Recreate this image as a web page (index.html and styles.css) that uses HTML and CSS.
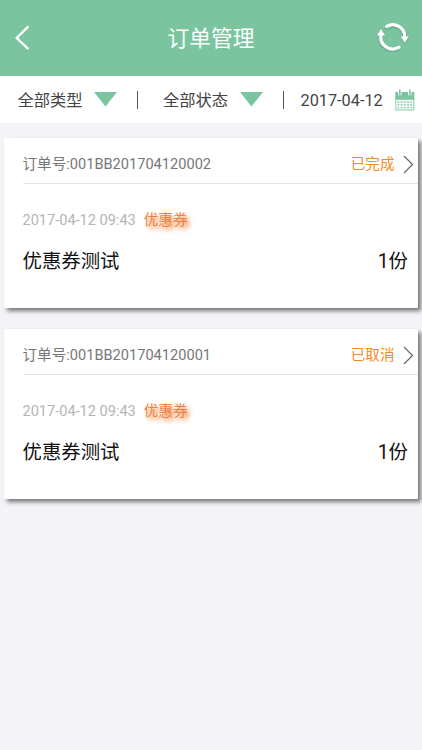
FILE: index.html
```html
<!DOCTYPE html>
<html lang="zh-CN">
<head>
<meta charset="utf-8">
<meta name="viewport" content="width=device-width, initial-scale=1">
<title>订单管理</title>
<link rel="stylesheet" href="styles.css">
</head>
<body>
<header class="topbar">
  <svg class="back" width="16" height="26" viewBox="0 0 16 26"><path d="M13.4 1.4 1.8 13l11.6 11.2" fill="none" stroke="#fff" stroke-width="2.4"/></svg>
  <h1 class="title">订单管理</h1>
  <svg class="refresh" width="34" height="32" viewBox="0 0 34 32">
    <g fill="none" stroke="#fff" stroke-width="3.2" stroke-linecap="round">
      <path d="M10.7 5.4A12 12 0 0 1 28.8 16"/>
      <path d="M23 26.2A12 12 0 0 1 5 14"/>
    </g>
    <path fill="#fff" d="M24.6 15.4h8.2l-4 6.4zM.9 14.6h8.2L5 8z"/>
  </svg>
</header>
<nav class="filters">
  <span class="type">全部类型</span>
  <svg class="arrow" width="23" height="15" viewBox="0 0 23 15"><path fill="#7ac5a0" d="M0 0h23L11.5 14.4z"/></svg>
  <i class="divider divider-type"></i>
  <span class="status">全部状态</span>
  <svg class="arrow" width="23" height="15" viewBox="0 0 23 15"><path fill="#7ac5a0" d="M0 0h23L11.5 14.4z"/></svg>
  <i class="divider divider-status"></i>
  <span class="date">2017-04-12</span>
  <svg class="calendar" width="20" height="22" viewBox="0 0 20 22">
    <path fill="#fff" stroke="#86cba9" d="M.8 9h18v12H.8z"/>
    <path fill="#7ac5a0" d="M.3 3h19v7.8H.3z"/>
    <path stroke="#fff" stroke-width="3.4" d="M4.8 2v4.2M14.8 2v4.2"/>
    <path stroke="#7ac5a0" stroke-width="1.6" stroke-linecap="round" d="M4.8 1.4v4.2M14.8 1.4v4.2"/>
    <path fill="none" stroke="#8fcfb0" stroke-width="1.6" stroke-dasharray="1.8 1.4" d="M2.5 13.1h15M2.5 15.9h15M2.5 18.7h15"/>
  </svg>
</nav>
<main class="orders">
  <article class="card">
    <div class="card-head">
      <span class="order-no">订单号:001BB201704120002</span>
      <span class="state">已完成</span>
      <svg class="chevron" width="11" height="19" viewBox="0 0 11 19"><path d="M1 1l8.5 8.5L1 18" fill="none" stroke="#666" stroke-width="1.2"/></svg>
    </div>
    <div class="meta"><time>2017-04-12 09:43</time><span class="tag">优惠券</span></div>
    <div class="item"><span>优惠券测试</span><span>1份</span></div>
  </article>
  <article class="card">
    <div class="card-head">
      <span class="order-no">订单号:001BB201704120001</span>
      <span class="state">已取消</span>
      <svg class="chevron" width="11" height="19" viewBox="0 0 11 19"><path d="M1 1l8.5 8.5L1 18" fill="none" stroke="#666" stroke-width="1.2"/></svg>
    </div>
    <div class="meta"><time>2017-04-12 09:43</time><span class="tag">优惠券</span></div>
    <div class="item"><span>优惠券测试</span><span>1份</span></div>
  </article>
</main>
</body>
</html>
```
FILE: styles.css
```css
* { box-sizing: border-box; }
body {
  margin: 0;
  min-height: 100vh;
  background: #f3f3f8;
  font-family: Roboto, "Noto Sans CJK SC", sans-serif;
  color: #444;
}
svg { display: block; flex: none; }
span, time { white-space: nowrap; }
.topbar {
  height: 76px;
  padding: 0 12px 0 15px;
  display: grid;
  grid-template-columns: 34px 1fr 34px;
  align-items: center;
  background: #7ac5a0;
}
.title {
  margin: 2px 3px 0 0;
  text-align: center;
  font-size: 21.7px;
  line-height: 30px;
  font-weight: 400;
  color: #fff;
}
.refresh { filter: drop-shadow(0 1px 1px rgba(0, 0, 0, .2)); margin-top: -2px; }
.filters {
  height: 47px;
  padding: 0 7px 0 17.5px;
  display: flex;
  align-items: center;
  background: #fff;
  font-size: 16.3px;
  line-height: 24px;
}
.filters span { margin-top: 2px; }
.type, .status { width: 65px; }
.arrow { margin: 0 0 0 11.5px; }
.divider { width: 1px; height: 18px; background: #555; }
.divider-type { margin: 0 25px 0 20px; }
.divider-status { margin: 0 17px 0 20px; }
.calendar { margin: 0 0 0 auto; }
.orders {
  padding: 15px 4px;
  display: grid;
  gap: 21px;
}
.card {
  height: 170px;
  padding-left: 18.5px;
  background: #fff;
  border-radius: 1px;
  box-shadow: 3px 3px 4px #777;
}
.card-head {
  height: 46px;
  padding: 7px 4.5px 0 0;
  display: flex;
  align-items: center;
  border-bottom: 1px solid #e5e5e5;
  font-size: 14.6px;
  line-height: 22px;
  color: #777;
}
.state { margin-left: auto; color: #fa8a20; }
.chevron { margin: 1px 0 0 8px; }
.meta {
  margin-top: 26px;
  display: flex;
  gap: 8px;
  font-size: 14.55px;
  line-height: 22px;
  color: #b5b5b5;
}
.tag { color: #e98445; text-shadow: 3px 3px 4px #f47a2a; }
.item {
  margin-top: 15px;
  padding-right: 10px;
  display: flex;
  justify-content: space-between;
  font-size: 19.4px;
  line-height: 30px;
  color: #111;
}
```
